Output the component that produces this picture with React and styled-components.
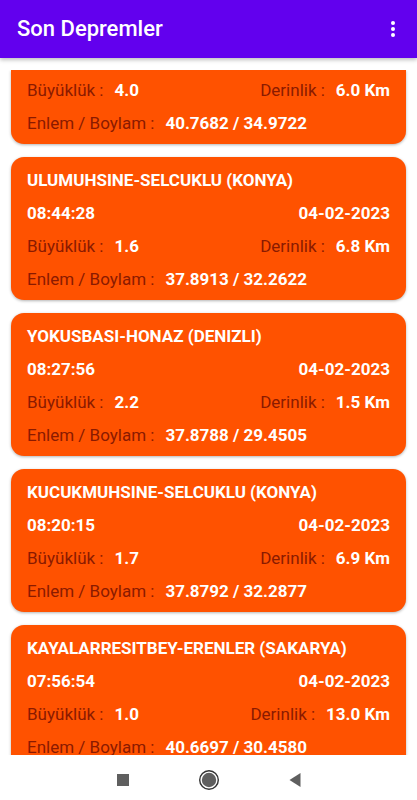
import React from "react";
import styled, { createGlobalStyle } from "styled-components";

const Global = createGlobalStyle`
  html, body { margin: 0; padding: 0; background: #ffffff; }
  body { font-family: Roboto, "Noto Sans", Arial, sans-serif; }
  * { box-sizing: border-box; }
`;

const Screen = styled.div`
  width: 417px;
  height: 800px;
  display: flex;
  flex-direction: column;
  background: #ffffff;
  overflow: hidden;
`;

const AppBar = styled.header`
  position: relative;
  z-index: 2;
  height: 58px;
  flex: 0 0 58px;
  background: #6200ee;
  display: flex;
  align-items: center;
  justify-content: space-between;
  padding: 0 17px 0 17px;
  box-shadow: 0 2px 4px rgba(0, 0, 0, 0.25);
`;

const Title = styled.h1`
  margin: 0;
  color: #ffffff;
  font-size: 22px;
  font-weight: 500;
  line-height: 28px;
`;

const MenuButton = styled.div`
  width: 8px;
  display: flex;
  flex-direction: column;
  align-items: center;
  gap: 2px;
  margin-right: 3px;
  span {
    width: 4px;
    height: 4px;
    border-radius: 50%;
    background: #ffffff;
  }
`;

const Viewport = styled.div`
  flex: 1 1 auto;
  margin-top: 12px;
  overflow: hidden;
`;

const List = styled.div`
  display: flex;
  flex-direction: column;
  gap: 13px;
  padding: 0 11px 13px;
`;

const Card = styled.div`
  background: #ff5200;
  border-radius: ${(p) => (p.$clipped ? "0 0 13px 13px" : "13px")};
  padding: ${(p) => (p.$clipped ? "9px 16px 10px" : "12px 16px 10px")};
  display: flex;
  flex-direction: column;
  gap: 11px;
  box-shadow: 0 1px 3px rgba(0, 0, 0, 0.3);
`;

const Row = styled.div`
  height: 22px;
  display: flex;
  align-items: center;
  justify-content: ${(p) => (p.$split ? "space-between" : "flex-start")};
  font-size: 17px;
  line-height: 22px;
  white-space: nowrap;
`;

const Heading = styled.div`
  color: #ffffff;
  font-weight: 700;
  font-size: 17px;
`;

const Bold = styled.span`
  color: #ffffff;
  font-weight: 700;
`;

const Field = styled.span`
  display: inline-flex;
  align-items: center;
`;

const Label = styled.span`
  color: #8a1a00;
  margin-right: 11px;
`;

const NavBar = styled.nav`
  flex: 0 0 45px;
  height: 45px;
  background: #ffffff;
  display: flex;
  align-items: center;
  justify-content: center;
  gap: 62px;
  padding-top: 5px;
`;

const NavIcon = styled.svg`
  display: block;
`;

const quakes = [
  { clipped: true, mag: "4.0", depth: "6.0", lat: "40.7682", lon: "34.9722" },
  { place: "ULUMUHSINE-SELCUKLU (KONYA)", time: "08:44:28", date: "04-02-2023", mag: "1.6", depth: "6.8", lat: "37.8913", lon: "32.2622" },
  { place: "YOKUSBASI-HONAZ (DENIZLI)", time: "08:27:56", date: "04-02-2023", mag: "2.2", depth: "1.5", lat: "37.8788", lon: "29.4505" },
  { place: "KUCUKMUHSINE-SELCUKLU (KONYA)", time: "08:20:15", date: "04-02-2023", mag: "1.7", depth: "6.9", lat: "37.8792", lon: "32.2877" },
  { place: "KAYALARRESITBEY-ERENLER (SAKARYA)", time: "07:56:54", date: "04-02-2023", mag: "1.0", depth: "13.0", lat: "40.6697", lon: "30.4580" },
];

function QuakeCard({ q }) {
  return (
    <Card $clipped={q.clipped}>
      {!q.clipped && (
        <>
          <Row><Heading>{q.place}</Heading></Row>
          <Row $split>
            <Bold>{q.time}</Bold>
            <Bold>{q.date}</Bold>
          </Row>
        </>
      )}
      <Row $split>
        <Field><Label>Büyüklük :</Label><Bold>{q.mag}</Bold></Field>
        <Field><Label>Derinlik :</Label><Bold>{q.depth} Km</Bold></Field>
      </Row>
      <Row>
        <Field><Label>Enlem / Boylam :</Label><Bold>{q.lat} / {q.lon}</Bold></Field>
      </Row>
    </Card>
  );
}

export default function App() {
  return (
    <>
      <Global />
      <Screen>
        <AppBar>
          <Title>Son Depremler</Title>
          <MenuButton><span /><span /><span /></MenuButton>
        </AppBar>
        <Viewport>
          <List>
            {quakes.map((q, i) => (
              <QuakeCard key={i} q={q} />
            ))}
          </List>
        </Viewport>
        <NavBar>
          <NavIcon width="24" height="24" viewBox="0 0 24 24">
            <rect x="6" y="6" width="12" height="12" fill="#5f5f5f" />
          </NavIcon>
          <NavIcon width="24" height="24" viewBox="0 0 24 24">
            <circle cx="12" cy="12" r="9.3" fill="none" stroke="#333" strokeWidth="1.4" />
            <circle cx="12" cy="12" r="7.2" fill="#5f5f5f" />
          </NavIcon>
          <NavIcon width="24" height="24" viewBox="0 0 24 24">
            <polygon points="17.5,5 17.5,19 6.5,12" fill="#5f5f5f" />
          </NavIcon>
        </NavBar>
      </Screen>
    </>
  );
}
